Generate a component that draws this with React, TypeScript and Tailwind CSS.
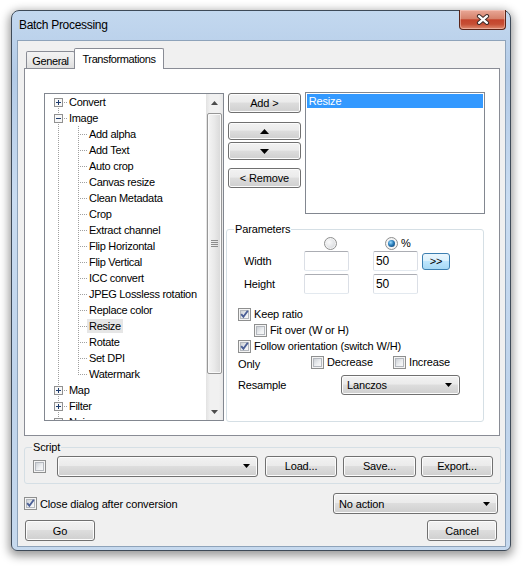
import React from "react";

const BTN =
  "flex items-center justify-center rounded-[3px] border border-[#707070] bg-[linear-gradient(180deg,#f2f2f2_0%,#ebebeb_45%,#dddddd_50%,#cfcfcf_100%)] shadow-[inset_0_0_0_1px_#fcfcfc]";
const COMBO =
  "flex items-center justify-between rounded-[3px] border border-[#707070] bg-[linear-gradient(180deg,#f2f2f2_0%,#ebebeb_45%,#dddddd_50%,#cfcfcf_100%)] shadow-[inset_0_0_0_1px_#fcfcfc] pl-[5px] pr-[7px]";
const INPUT =
  "h-[20px] w-[45px] rounded-[2px] border border-[#abadb3] border-x-[#dbdfe6] border-b-[#e3e9ef] bg-white pl-[2px] leading-[18px] text-[12px]";

type Node = {
  label: string;
  depth: 0 | 1;
  box?: "+" | "-";
  first?: boolean;
  last?: boolean;
  selected?: boolean;
};

const imageChildren = [
  "Add alpha",
  "Add Text",
  "Auto crop",
  "Canvas resize",
  "Clean Metadata",
  "Crop",
  "Extract channel",
  "Flip Horizontal",
  "Flip Vertical",
  "ICC convert",
  "JPEG Lossless rotation",
  "Replace color",
  "Resize",
  "Rotate",
  "Set DPI",
  "Watermark",
];

const nodes: Node[] = [
  { label: "Convert", depth: 0, box: "+", first: true },
  { label: "Image", depth: 0, box: "-" },
  ...imageChildren.map((label, i) => ({
    label,
    depth: 1 as const,
    last: i === imageChildren.length - 1,
    selected: label === "Resize",
  })),
  { label: "Map", depth: 0, box: "+" },
  { label: "Filter", depth: 0, box: "+" },
  { label: "Noise", depth: 0, box: "+" },
];

const DOT = "#a0a0a0";

function RootLines({ box, first }: { box?: "+" | "-"; first?: boolean }) {
  return (
    <svg width="22" height="16" className="shrink-0" shapeRendering="crispEdges">
      <line x1="13.5" y1={first ? 8 : 0} x2="13.5" y2="16" stroke={DOT} strokeDasharray="1 1" />
      <line x1="19" y1="8.5" x2="22" y2="8.5" stroke={DOT} strokeDasharray="1 1" />
      <rect x="9.5" y="4.5" width="8" height="8" fill="#f8f8f8" stroke="#919191" />
      <line x1="11" y1="8.5" x2="16" y2="8.5" stroke="#1f3d6e" />
      {box === "+" && <line x1="13.5" y1="6" x2="13.5" y2="11" stroke="#1f3d6e" />}
    </svg>
  );
}

function ChildLines({ last }: { last?: boolean }) {
  return (
    <svg width="42" height="16" className="shrink-0" shapeRendering="crispEdges">
      <line x1="13.5" y1="0" x2="13.5" y2="16" stroke={DOT} strokeDasharray="1 1" />
      <line x1="33.5" y1="0" x2="33.5" y2={last ? 9 : 16} stroke={DOT} strokeDasharray="1 1" />
      <line x1="35" y1="8.5" x2="42" y2="8.5" stroke={DOT} strokeDasharray="1 1" />
    </svg>
  );
}

function Tri({ w, h, up, color = "#000" }: { w: number; h: number; up?: boolean; color?: string }) {
  return (
    <svg width={w} height={h} viewBox={`0 0 ${w} ${h}`} className="shrink-0">
      <path d={up ? `M0 ${h}H${w}L${w / 2} 0Z` : `M0 0H${w}L${w / 2} ${h}Z`} fill={color} />
    </svg>
  );
}

function Check({ checked }: { checked?: boolean }) {
  return (
    <div className="relative flex h-[13px] w-[13px] shrink-0 items-center justify-center border border-[#8e8f8f] bg-[#f4f4f4]">
      <div className="h-[9px] w-[9px] border border-[#b4b8be] bg-[linear-gradient(135deg,#cdd1d6_0%,#eef0f2_60%,#f8f8f8_100%)]" />
      {checked && (
        <svg className="absolute left-0 top-0" width="11" height="11" viewBox="0 0 11 11">
          <path d="M2.2 5.2 L4.4 7.8 L8.8 1.8" fill="none" stroke="#4b5f96" strokeWidth="1.9" />
        </svg>
      )}
    </div>
  );
}

function Radio({ checked }: { checked?: boolean }) {
  return (
    <div className="flex h-[13px] w-[13px] shrink-0 items-center justify-center rounded-full border border-[#8e8f8f] bg-[#f4f4f4]">
      {checked ? (
        <div className="h-[7px] w-[7px] rounded-full bg-[radial-gradient(circle_at_38%_35%,#9bdcff_0%,#2a7dba_45%,#0b3561_100%)]" />
      ) : (
        <div className="h-[9px] w-[9px] rounded-full bg-[radial-gradient(circle_at_35%_35%,#fbfbfb_0%,#d3d6da_100%)]" />
      )}
    </div>
  );
}

function Tree() {
  return (
    <div className="flex h-[328px] w-[180px] shrink-0 border border-[#828790] bg-white">
      <div className="w-[161px] overflow-hidden tracking-[-0.3px]">
        {nodes.map((n) => (
          <div key={n.label} className="flex h-[16px] items-center whitespace-nowrap">
            {n.depth === 0 ? <RootLines box={n.box} first={n.first} /> : <ChildLines last={n.last} />}
            <span className={n.selected ? "bg-[#e6e6e6] px-[2px] leading-[14px]" : "px-[2px] leading-[14px]"}>
              {n.label}
            </span>
          </div>
        ))}
      </div>
      <div className="flex w-[17px] flex-col bg-[linear-gradient(90deg,#e2e2e2_0%,#f1f1f1_25%,#f1f1f1_75%,#e8e8e8_100%)]">
        <div className="flex h-[17px] items-center justify-center">
          <Tri w={7} h={4} up color="#4d4d4d" />
        </div>
        <div className="mx-px mt-[2px] flex h-[261px] items-center justify-center rounded-[2px] border border-[#979797] bg-[linear-gradient(90deg,#f5f5f5_0%,#e9e9e9_50%,#d8d8d8_100%)] shadow-[inset_0_0_0_1px_#fafafa]">
          <div className="flex w-[7px] flex-col gap-px">
            <div className="h-px bg-[#8c8c8c]" />
            <div className="h-px bg-[#8c8c8c]" />
            <div className="h-px bg-[#8c8c8c]" />
            <div className="h-px bg-[#8c8c8c]" />
          </div>
        </div>
        <div className="flex-1" />
        <div className="flex h-[17px] items-center justify-center">
          <Tri w={7} h={4} color="#4d4d4d" />
        </div>
      </div>
    </div>
  );
}

function Parameters() {
  return (
    <fieldset className="-ml-px mt-[9px] w-[258px] rounded-[3px] border border-[#d5dfe5] pb-[26px]">
      <legend className="ml-[7px] px-[1px] leading-[13px]">Parameters</legend>
      <div className="flex h-[14px] items-center">
        <div className="ml-[97px]">
          <Radio />
        </div>
        <div className="ml-[48px] flex items-center gap-[3px]">
          <Radio checked />
          <span className="leading-[14px]">%</span>
        </div>
      </div>
      <div className="mt-[1px] flex h-[20px] items-center pl-[17px]">
        <span className="w-[60px]">Width</span>
        <div className={INPUT} />
        <div className={INPUT + " ml-[24px]"}>50</div>
        <div className="ml-[4px] flex h-[17px] w-[28px] items-center justify-center rounded-[3px] border border-[#3c7fb1] bg-[linear-gradient(180deg,#eaf6fd_0%,#d9f0fc_50%,#bee6fd_50%,#a7d9f5_100%)] leading-[14px]">
        {">>"}
        </div>
      </div>
      <div className="mt-[3px] flex h-[20px] items-center pl-[17px]">
        <span className="w-[60px]">Height</span>
        <div className={INPUT} />
        <div className={INPUT + " ml-[24px]"}>50</div>
      </div>
      <div className="mt-[12px] flex h-[16px] items-center gap-[3px] pl-[11px]">
        <Check checked />
        <span>Keep ratio</span>
      </div>
      <div className="flex h-[16px] items-center gap-[3px] pl-[27px]">
        <Check />
        <span>Fit over (W or H)</span>
      </div>
      <div className="flex h-[16px] items-center gap-[3px] pl-[11px]">
        <Check checked />
        <span>Follow orientation (switch W/H)</span>
      </div>
      <div className="flex h-[16px] items-center pl-[11px]">
        <span className="w-[73px] pt-[3px]">Only</span>
        <div className="flex w-[82px] items-center gap-[3px]">
          <Check />
          <span>Decrease</span>
        </div>
        <div className="flex items-center gap-[3px]">
          <Check />
          <span>Increase</span>
        </div>
      </div>
      <div className="mt-[5px] flex h-[20px] items-center pl-[11px]">
        <span className="w-[103px]">Resample</span>
        <div className={COMBO + " h-[20px] w-[119px]"}>
          <span>Lanczos</span>
          <Tri w={7} h={4} />
        </div>
      </div>
    </fieldset>
  );
}

export default function App() {
  return (
    <div className="min-h-[570px] bg-white pl-[11px] pt-[10px] font-['Liberation_Sans',Arial,sans-serif] text-[11px] leading-[14px] tracking-[-0.15px] text-black">
      <div className="w-[500px] rounded-t-[8px] rounded-b-[6px] border border-[#3e4a58] bg-[linear-gradient(180deg,#c3d8ef_0%,#b3cbe7_12%,#c9dcf1_35%,#bed3eb_70%,#c6d9ee_100%)] pb-[3px] shadow-[0_3px_10px_2px_rgba(0,0,0,0.4)]">
        {/* Title bar */}
        <div className="flex h-[29px] items-start justify-between pl-[7px] pr-[4px]">
          <span className="mt-[7px] text-[12px] leading-[14px] tracking-[-0.3px] text-black">Batch Processing</span>
          <div className="-mt-px flex h-[20px] w-[47px] items-center justify-center rounded-b-[4px] border border-t-0 border-[#5a2418] bg-[linear-gradient(180deg,#e9a897_0%,#d6826c_45%,#c4442c_52%,#c64f35_75%,#df8b70_100%)] shadow-[inset_0_0_0_1px_rgba(255,220,210,0.45)]">
            <svg width="14" height="11" viewBox="0 0 14 11">
              <path d="M3 2.2 L11 8.8 M11 2.2 L3 8.8" stroke="#3b2a28" strokeWidth="4.2" strokeLinecap="round" />
              <path d="M3 2.2 L11 8.8 M11 2.2 L3 8.8" stroke="#ffffff" strokeWidth="2.3" strokeLinecap="round" />
            </svg>
          </div>
        </div>

        {/* Client area */}
        <div className="ml-[5px] mr-[4px] w-[489px] border border-[#8ea3ba] bg-[#f0f0f0] pb-[5px] pt-[7px]">
          {/* Tabs */}
          <div className="ml-[6px] flex h-[20px] items-end pl-[2px]">
            <div className="-mr-px h-[17px] w-[49px] rounded-t-[2px] border border-b-0 border-[#898c95] bg-[linear-gradient(180deg,#f3f3f3_0%,#ebebeb_50%,#dedede_100%)] pt-[2px] text-center tracking-[-0.4px]">
              General
            </div>
            <div className="relative z-10 -mb-px h-[21px] w-[90px] rounded-t-[2px] border border-b-0 border-[#898c95] bg-white pt-[3px] text-center tracking-[-0.4px]">
              Transformations
            </div>
          </div>

          {/* Tab panel */}
          <div className="ml-[6px] flex h-[368px] w-[476px] border border-[#898c95] bg-white pl-[19px] pt-[24px]">
            <Tree />
            <div className="-mt-px ml-[3px] flex w-[258px] flex-col">
              <div className="flex">
                <div className="ml-px mt-px flex w-[73px] flex-col">
                  <div className={BTN + " h-[20px]"}>Add &gt;</div>
                  <div className={BTN + " mt-[9px] h-[18px]"}>
                    <Tri w={9} h={5} up />
                  </div>
                  <div className={BTN + " mt-[2px] h-[18px]"}>
                    <Tri w={9} h={5} />
                  </div>
                  <div className={BTN + " mt-[8px] h-[20px]"}>&lt; Remove</div>
                </div>
                <div className="ml-[4px] h-[122px] w-[181px] border border-[#828790] bg-white p-px">
                  <div className="h-[14px] bg-[#3399ff] pl-[2px] leading-[14px] text-white">Resize</div>
                </div>
              </div>
              <Parameters />
            </div>
          </div>

          {/* Script */}
          <fieldset className="ml-[6px] mt-[5px] w-[477px] rounded-[3px] border border-[#d5dfe5] pb-[6px]">
            <legend className="ml-[7px] px-[1px] leading-[13px]">Script</legend>
            <div className="mt-px flex h-[22px] items-center pl-[8px]">
              <Check />
              <div className={COMBO + " ml-[11px] h-[21px] w-[201px]"}>
                <span />
                <Tri w={7} h={4} />
              </div>
              <div className={BTN + " ml-[7px] h-[21px] w-[72px]"}>Load...</div>
              <div className={BTN + " ml-[6px] h-[21px] w-[73px]"}>Save...</div>
              <div className={BTN + " ml-[5px] h-[21px] w-[72px]"}>Export...</div>
            </div>
          </fieldset>

          {/* Close + action */}
          <div className="mt-[9px] flex h-[21px] items-center justify-between pl-[6px] pr-[7px]">
            <div className="flex items-center gap-[3px]">
              <Check checked />
              <span>Close dialog after conversion</span>
            </div>
            <div className={COMBO + " h-[21px] w-[165px]"}>
              <span>No action</span>
              <Tri w={7} h={4} />
            </div>
          </div>

          {/* Go / Cancel */}
          <div className="mt-[6px] flex h-[21px] items-center justify-between pl-[7px] pr-[8px]">
            <div className={BTN + " h-[21px] w-[70px]"}>Go</div>
            <div className={BTN + " h-[21px] w-[70px]"}>Cancel</div>
          </div>
        </div>
      </div>
    </div>
  );
}
